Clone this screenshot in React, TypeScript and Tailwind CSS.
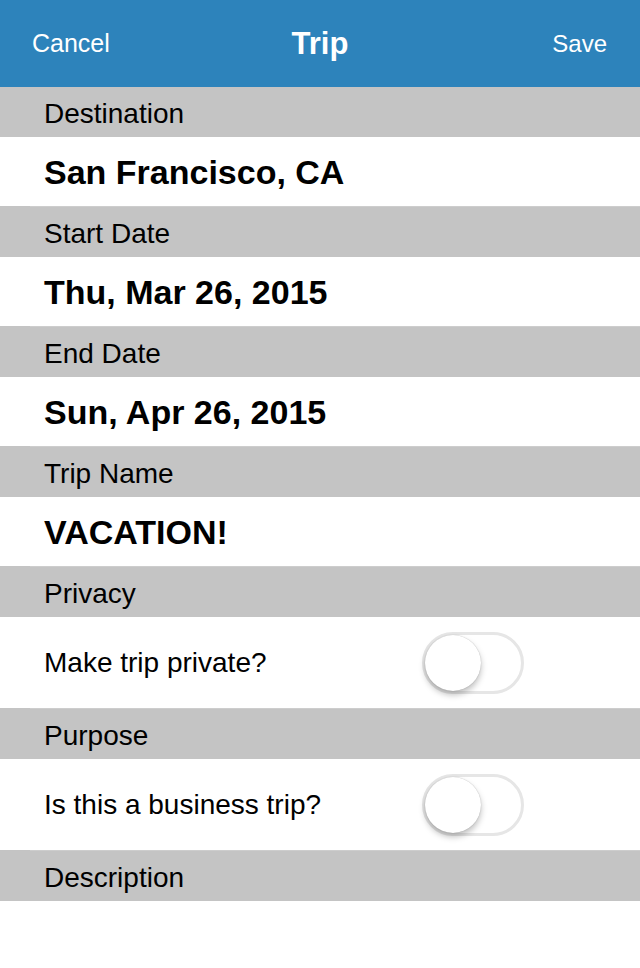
import React from 'react';

const font = { fontFamily: '"Liberation Sans", Arial, sans-serif' };

function SectionHeader({ label }: { label: string }) {
  return (
    <div className="h-[50px] bg-[#c4c4c4] flex items-center pl-[44px] pt-[4px] text-[28px] text-black leading-none">
      {label}
    </div>
  );
}

function Separator() {
  return (
    <div className="h-px bg-[#c4c4c4]">
      <div className="ml-[30px] h-px bg-[#cdcdcd]" />
    </div>
  );
}

function ValueRow({ value }: { value: string }) {
  return (
    <div className="h-[70px] flex flex-col bg-white">
      <div className="flex-1 flex items-center pl-[44px] text-[34px] font-bold text-black leading-none">
        {value}
      </div>
      <Separator />
    </div>
  );
}

function Toggle() {
  return (
    <div className="relative w-[102px] h-[62px] rounded-full border-[3px] border-[#e6e6e6] bg-white">
      <div className="absolute left-[0px] top-[0px] w-[56px] h-[56px] rounded-full bg-white shadow-[0_4px_6px_rgba(0,0,0,0.25),0_0_1px_rgba(0,0,0,0.3)]" />
    </div>
  );
}

function ToggleRow({ label }: { label: string }) {
  return (
    <div className="h-[92px] flex flex-col bg-white">
      <div className="flex-1 flex items-center pl-[44px] pr-[116px]">
        <span className="text-[28px] text-black leading-none">{label}</span>
        <div className="ml-auto">
          <Toggle />
        </div>
      </div>
      <Separator />
    </div>
  );
}

export default function App() {
  return (
    <div className="w-[640px] h-[968px] bg-white overflow-hidden" style={font}>
      <div className="h-[87px] bg-[#2d83bb] grid grid-cols-3 items-center px-[32px] text-white">
        <span className="text-[25px] leading-none">Cancel</span>
        <span className="text-[31px] font-bold leading-none text-center">Trip</span>
        <span className="text-[24px] leading-none text-right pr-px">Save</span>
      </div>
      <SectionHeader label="Destination" />
      <ValueRow value="San Francisco, CA" />
      <SectionHeader label="Start Date" />
      <ValueRow value="Thu, Mar 26, 2015" />
      <SectionHeader label="End Date" />
      <ValueRow value="Sun, Apr 26, 2015" />
      <SectionHeader label="Trip Name" />
      <ValueRow value="VACATION!" />
      <SectionHeader label="Privacy" />
      <ToggleRow label="Make trip private?" />
      <SectionHeader label="Purpose" />
      <ToggleRow label="Is this a business trip?" />
      <SectionHeader label="Description" />
    </div>
  );
}
